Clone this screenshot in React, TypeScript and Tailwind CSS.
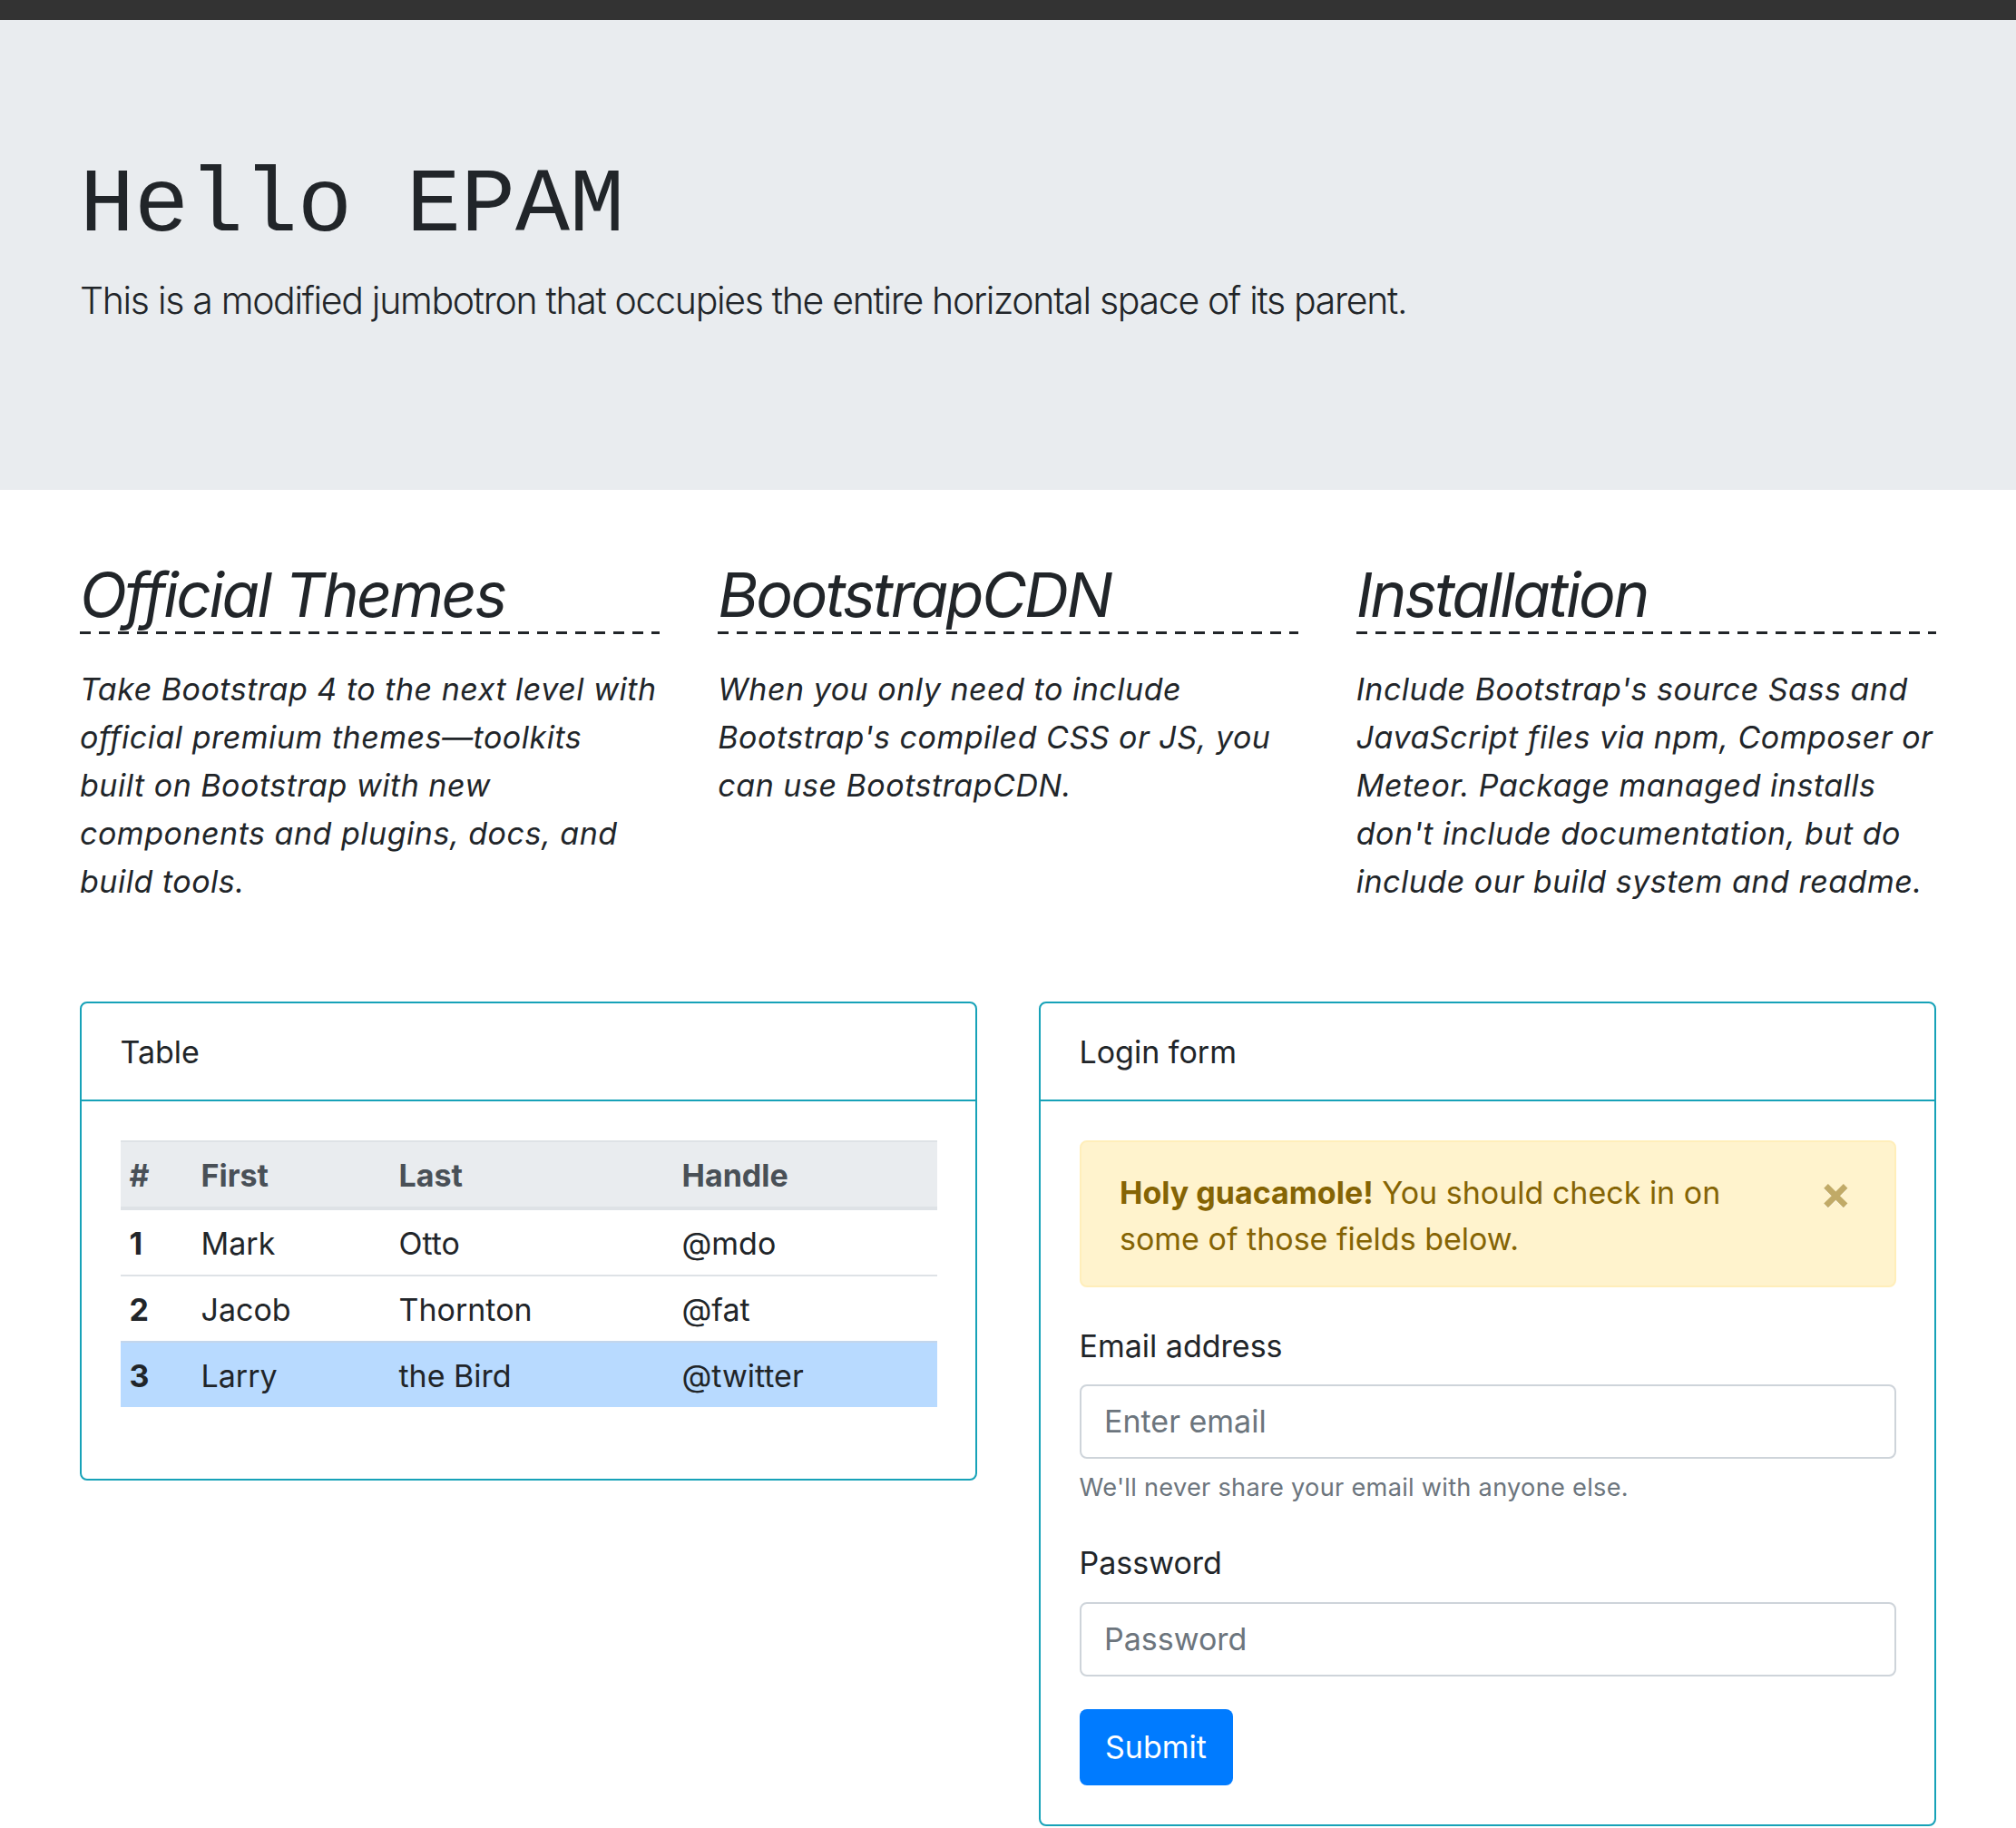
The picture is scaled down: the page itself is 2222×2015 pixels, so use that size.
import React from "react";

const rows = [
  { n: "1", first: "Mark", last: "Otto", handle: "@mdo" },
  { n: "2", first: "Jacob", last: "Thornton", handle: "@fat" },
  { n: "3", first: "Larry", last: "the Bird", handle: "@twitter" },
];

function Column({ title, lines }: { title: string; lines: string[] }) {
  return (
    <div>
      <h2 className="italic font-normal text-[68px] leading-[81.6px] tracking-[-0.038em]">{title}</h2>
      <div className="h-[3px] bg-[repeating-linear-gradient(to_right,#212529_0px,#212529_12px,transparent_12px,transparent_21px)]" />
      <p className="mt-[34px] italic text-[34px] leading-[53px] tracking-[0.015em] whitespace-nowrap">
        {lines.map((l, i) => (
          <React.Fragment key={i}>
            {l}
            {i < lines.length - 1 && <br />}
          </React.Fragment>
        ))}
      </p>
    </div>
  );
}

export default function App() {
  return (
    <div className="min-h-screen bg-white text-[#212529] font-['Inter',sans-serif]">
      <div className="h-[22px] bg-[#333333]" />
      <div className="bg-[#e9ecef] px-[88px] pt-[146px] pb-[176px]">
        <h1 className="font-['Courier_New','Liberation_Mono',monospace] text-[100px] leading-[120px] font-normal mb-[12px]">
          Hello EPAM
        </h1>
        <p className="font-light text-[41px] leading-[63.75px] tracking-[-0.032em]">
          This is a modified jumbotron that occupies the entire horizontal space of its parent.
        </p>
      </div>

      <div className="px-[88px]">
        <div className="grid grid-cols-3 gap-x-[64px] pt-[75px]">
          <Column
            title="Official Themes"
            lines={[
              "Take Bootstrap 4 to the next level with",
              "official premium themes—toolkits",
              "built on Bootstrap with new",
              "components and plugins, docs, and",
              "build tools.",
            ]}
          />
          <Column
            title="BootstrapCDN"
            lines={[
              "When you only need to include",
              "Bootstrap's compiled CSS or JS, you",
              "can use BootstrapCDN.",
            ]}
          />
          <Column
            title="Installation"
            lines={[
              "Include Bootstrap's source Sass and",
              "JavaScript files via npm, Composer or",
              "Meteor. Package managed installs",
              "don't include documentation, but do",
              "include our build system and readme.",
            ]}
          />
        </div>

        <div className="grid grid-cols-2 gap-x-[68px] mt-[106px] items-start text-[34px] leading-[51px]">
          {/* Table card */}
          <div className="border-2 border-[#17a2b8] rounded-[8px]">
            <div className="px-[42.5px] py-[27.5px] border-b-2 border-[#17a2b8]">Table</div>
            <div className="px-[42.5px] pt-[42.5px] pb-[45px]">
              <table className="w-full border-separate border-spacing-0 mb-[34px] text-left">
                <colgroup>
                  <col className="w-[79px]" />
                  <col className="w-[218px]" />
                  <col className="w-[312px]" />
                  <col />
                </colgroup>
                <thead>
                  <tr className="bg-[#e9ecef] text-[#495057]">
                    {["#", "First", "Last", "Handle"].map((h) => (
                      <th
                        key={h}
                        className="font-bold px-[10px] pt-[11px] pb-[9px] border-t-2 border-b-4 border-[#dee2e6]"
                      >
                        {h}
                      </th>
                    ))}
                  </tr>
                </thead>
                <tbody>
                  {rows.map((r, i) => {
                    const hl = i === 2;
                    const cell =
                      "px-[10px] pt-[11px] pb-[9px] " +
                      (i === 0 ? "" : hl ? "border-t-2 border-[#c3d6ec] " : "border-t-2 border-[#dee2e6] ");
                    return (
                      <tr key={r.n} className={hl ? "bg-[#b8daff]" : ""}>
                        <th className={cell + "font-bold"}>{r.n}</th>
                        <td className={cell}>{r.first}</td>
                        <td className={cell}>{r.last}</td>
                        <td className={cell}>{r.handle}</td>
                      </tr>
                    );
                  })}
                </tbody>
              </table>
            </div>
          </div>

          {/* Login card */}
          <div className="border-2 border-[#17a2b8] rounded-[8px]">
            <div className="px-[42.5px] py-[27.5px] border-b-2 border-[#17a2b8]">Login form</div>
            <div className="px-[42.5px] pt-[42.5px] pb-[43px]">
              <div className="relative mb-[39px] rounded-[8px] border-2 border-[#ffeeba] bg-[#fff3cd] text-[#856404] pl-[42.5px] pr-[136px] pt-[30px] pb-[26px]">
                <strong className="font-bold">Holy guacamole!</strong> You should check in on some of those fields
                below.
                <button
                  type="button"
                  className="absolute top-0 right-0 pl-[42.5px] pr-[47px] pt-[30px] pb-[25.5px] text-[51px] leading-none font-bold text-[#856404] opacity-50 [text-shadow:0_1px_0_#fff]"
                  aria-label="Close"
                >
                  ×
                </button>
              </div>

              <label className="block mb-[17px]">Email address</label>
              <input
                type="email"
                placeholder="Enter email"
                className="block w-full h-[82px] px-[25.5px] border-2 border-[#ced4da] rounded-[8px] text-[34px] placeholder:text-[#6c757d] outline-none bg-white"
              />
              <div className="mt-[12px] text-[27.2px] leading-[40.8px] tracking-[0.01em] text-[#6c757d]">
                We'll never share your email with anyone else.
              </div>

              <label className="block mt-[36px] mb-[18px]">Password</label>
              <input
                type="password"
                placeholder="Password"
                className="block w-full h-[82px] px-[25.5px] border-2 border-[#ced4da] rounded-[8px] text-[34px] placeholder:text-[#6c757d] outline-none bg-white"
              />

              <button
                type="submit"
                className="mt-[36px] h-[84px] w-[169px] rounded-[8px] bg-[#007bff] text-white text-[34px] leading-[51px]"
              >
                Submit
              </button>
            </div>
          </div>
        </div>
      </div>
    </div>
  );
}
